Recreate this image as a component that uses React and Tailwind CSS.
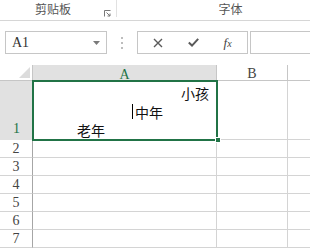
// Excel-like ribbon strip, formula bar and sheet grid
const headerFont = { fontFamily: '"Liberation Serif", "Noto Sans CJK SC", serif' };
const cjk = { fontFamily: '"Noto Sans CJK SC", "Liberation Sans", sans-serif' };

const rows = [2, 3, 4, 5, 6, 7];

const DialogLauncher = () => (
  <svg width="7" height="7" viewBox="0 0 7 7" className="text-[#777]">
    <path d="M0.5 6.5V0.5H6.5" fill="none" stroke="currentColor" strokeWidth="1" />
    <path d="M2.5 2.5L6 6M3.5 6H6V3.5" fill="none" stroke="currentColor" strokeWidth="1" />
  </svg>
);

const App = () => {
  return (
    <div className="w-[310px] h-[248px] overflow-hidden bg-white select-none">
      {/* Ribbon group labels */}
      <div className="flex h-[21px] border-b border-[#d6d6d6] text-[12px] text-[#555]" style={cjk}>
        <div className="w-[117px] border-r border-[#e1e1e1] mb-[3px] relative flex justify-center pt-[1px] pr-[10px]">
          <span className="leading-[16px]">剪贴板</span>
          <span className="absolute right-[5px] top-[10px]"><DialogLauncher /></span>
        </div>
        <div className="flex-1 flex justify-center pt-[1px] pl-[34px]">
          <span className="leading-[16px]">字体</span>
        </div>
      </div>

      {/* Formula bar */}
      <div className="flex items-start h-[44px] pt-[10px] pl-[5px]">
        <div className="w-[102px] h-[23px] border border-[#c6c6c6] flex items-center justify-between pl-[6px] pr-[6px]">
          <span className="text-[14px] text-[#333] leading-none" style={headerFont}>A1</span>
          <svg width="7" height="4" viewBox="0 0 7 4"><path d="M0 0H7L3.5 4Z" fill="#7a7a7a" /></svg>
        </div>
        <div className="w-[30px] h-[23px] flex flex-col items-center justify-center gap-[3px]">
          <span className="w-[2px] h-[2px] bg-[#bdbdbd]" />
          <span className="w-[2px] h-[2px] bg-[#bdbdbd]" />
          <span className="w-[2px] h-[2px] bg-[#bdbdbd]" />
        </div>
        <div className="w-[111px] h-[23px] border border-[#c6c6c6] flex items-center justify-around px-[3px]">
          <svg width="10" height="10" viewBox="0 0 10 10">
            <path d="M1 1L9 9M9 1L1 9" stroke="#5a5a5a" strokeWidth="1.4" />
          </svg>
          <svg width="11" height="9" viewBox="0 0 11 9">
            <path d="M0.8 4.6L4 7.6L10.2 0.8" fill="none" stroke="#5a5a5a" strokeWidth="2" />
          </svg>
          <span className="text-[13px] italic text-[#444] leading-none" style={{ fontFamily: '"Liberation Serif", serif' }}>
            f<span className="text-[10px]">x</span>
          </span>
        </div>
        <div className="flex-1 h-[23px] ml-[2px] border border-r-0 border-[#c6c6c6]" />
      </div>

      {/* Sheet grid */}
      <div className="relative grid grid-cols-[33px_184px_71px_1fr] grid-rows-[16px_59px_repeat(6,18px)]">
        {/* header row */}
        <div className="border-b border-r border-[#c6c6c6] bg-white flex items-end justify-end pr-[2px] pb-[2px]">
          <svg width="11" height="11" viewBox="0 0 11 11"><path d="M11 0V11H0Z" fill="#dcdcdc" /></svg>
        </div>
        <div className="bg-[#e1e1e1] border-r border-[#c6c6c6] flex items-center justify-center pt-[2px] text-[14px] text-[#217346]" style={headerFont}>A</div>
        <div className="bg-white border-b border-r border-[#c6c6c6] flex items-center justify-center pt-[2px] text-[14px] text-[#444]" style={headerFont}>B</div>
        <div className="bg-white border-b border-[#c6c6c6]" />

        {/* row 1 */}
        <div className="bg-[#e1e1e1] flex items-end justify-center pb-[1px] text-[14px] text-[#217346]" style={headerFont}>1</div>
        <div className="flex flex-col pt-[3px] text-[14px] text-[#111] leading-[18.5px]" style={cjk}>
          <div className="text-right pr-[8px]">小孩</div>
          <div className="flex items-center pl-[99px]">
            <span className="w-[1px] h-[15px] bg-black mr-[2px]" />
            <span>中年</span>
          </div>
          <div className="pl-[44px]">老年</div>
        </div>
        <div className="border-b border-r border-[#d4d4d4]" />
        <div className="border-b border-[#d4d4d4]" />

        {rows.map((r) => (
          <div key={r} className="contents">
            <div className="border-b border-r border-[#d4d4d4] border-r-[#a6a6a6] flex items-end justify-center pb-[1px] text-[14px] text-[#444] leading-[15px]" style={headerFont}>{r}</div>
            <div className="border-b border-r border-[#d4d4d4]" />
            <div className="border-b border-r border-[#d4d4d4]" />
            <div className="border-b border-[#d4d4d4]" />
          </div>
        ))}

        {/* selection box and fill handle */}
        <div className="absolute left-[32px] top-[15px] w-[186px] h-[61px] border-2 border-[#217346] pointer-events-none" />
        <div className="absolute left-[215px] top-[72px] w-[6px] h-[6px] bg-[#217346] border border-white pointer-events-none" />
      </div>
    </div>
  );
};

export default App;
